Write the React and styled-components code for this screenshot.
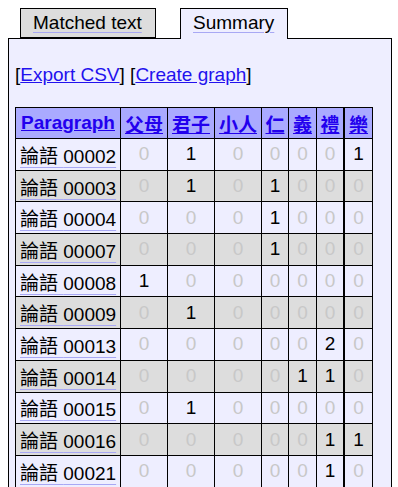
import React from 'react';
import styled, { createGlobalStyle } from 'styled-components';

const GlobalStyle = createGlobalStyle`
  body {
    margin: 0;
    background: #ffffff;
    font-family: "Liberation Sans", "Noto Sans CJK TC", sans-serif;
    color: #000000;
  }
`;

const Page = styled.div`
  padding: 8px 0 0 8px;
  width: 384px;
`;

const TabBar = styled.div`
  display: flex;
  gap: 24px;
  padding-left: 12px;
  height: 30px;
  position: relative;
  z-index: 1;
`;

const Tab = styled.div`
  box-sizing: border-box;
  width: ${({ $width }) => $width}px;
  height: ${({ $active }) => ($active ? 31 : 30)}px;
  padding: 0 12px;
  border: 1px solid #000;
  border-bottom: ${({ $active }) => ($active ? 'none' : '1px solid #000')};
  background: ${({ $active }) => ($active ? '#eeeeff' : '#dddddd')};
  font-size: 19px;
  line-height: 28px;
  white-space: nowrap;
`;

const TabLabel = styled.span`
  text-decoration: underline;
  text-decoration-color: #a8a8f4;
  text-underline-offset: 3px;
`;

const Panel = styled.div`
  box-sizing: border-box;
  width: 384px;
  border: 1px solid #000;
  background: #eeeeff;
  padding: 25px 0 20px 6px;
`;

const LinkBar = styled.div`
  font-size: 19px;
  line-height: 22px;
  margin-bottom: 21px;

  a {
    color: #2211ee;
    text-decoration: underline;
  }
`;

const Table = styled.table`
  border-collapse: collapse;
  font-size: 19px;
`;

const HeadCell = styled.th`
  width: ${({ $w }) => $w}px;
  height: 30px;
  padding: 0;
  background: #aaaaff;
  border: 1px solid #000;
  border-left-width: ${({ $thick }) => ($thick ? 2 : 1)}px;
  text-align: center;
  font-weight: bold;

  a {
    color: #2200ee;
    text-decoration: underline;
  }
`;

const Row = styled.tr`
  background: ${({ $shade }) => ($shade ? '#dddddd' : '#eeeeff')};
`;

const NameCell = styled.td`
  height: 30.7px;
  padding: 0 0 0 4px;
  border: 1px solid #000;
  white-space: nowrap;
`;

const NameLink = styled.span`
  text-decoration: underline;
  text-decoration-color: #a8a8f4;
  text-underline-offset: 4px;
`;

const CountCell = styled.td`
  height: 30.7px;
  padding: 0;
  border: 1px solid #000;
  border-left-width: ${({ $thick }) => ($thick ? 2 : 1)}px;
  text-align: center;
  color: ${({ $zero }) => ($zero ? '#c8c8c8' : '#000')};
`;

const columns = [
  { label: 'Paragraph', w: 104 },
  { label: '父母', w: 46 },
  { label: '君子', w: 46 },
  { label: '小人', w: 46 },
  { label: '仁', w: 26 },
  { label: '義', w: 27 },
  { label: '禮', w: 26 },
  { label: '樂', w: 27 },
];

const rows = [
  ['00002', [0, 1, 0, 0, 0, 0, 1]],
  ['00003', [0, 1, 0, 1, 0, 0, 0]],
  ['00004', [0, 0, 0, 1, 0, 0, 0]],
  ['00007', [0, 0, 0, 1, 0, 0, 0]],
  ['00008', [1, 0, 0, 0, 0, 0, 0]],
  ['00009', [0, 1, 0, 0, 0, 0, 0]],
  ['00013', [0, 0, 0, 0, 0, 2, 0]],
  ['00014', [0, 0, 0, 0, 1, 1, 0]],
  ['00015', [0, 1, 0, 0, 0, 0, 0]],
  ['00016', [0, 0, 0, 0, 0, 1, 1]],
  ['00021', [0, 0, 0, 0, 0, 1, 0]],
];

export default function App() {
  return (
    <>
      <GlobalStyle />
      <Page>
        <TabBar>
          <Tab $width={136}>
            <TabLabel>Matched text</TabLabel>
          </Tab>
          <Tab $width={108} $active>
            <TabLabel>Summary</TabLabel>
          </Tab>
        </TabBar>
        <Panel>
          <LinkBar>
            [<a href="#csv">Export CSV</a>] [<a href="#graph">Create graph</a>]
          </LinkBar>
          <Table>
            <thead>
              <tr>
                {columns.map((c, i) => (
                  <HeadCell key={c.label} $w={c.w} $thick={i === 7}>
                    <a href={`#${c.label}`}>{c.label}</a>
                  </HeadCell>
                ))}
              </tr>
            </thead>
            <tbody>
              {rows.map(([id, counts], r) => (
                <Row key={id} $shade={r % 2 === 1}>
                  <NameCell>
                    <NameLink>論語 {id}</NameLink>
                  </NameCell>
                  {counts.map((n, i) => (
                    <CountCell key={i} $zero={n === 0} $thick={i === 6}>
                      {n}
                    </CountCell>
                  ))}
                </Row>
              ))}
            </tbody>
          </Table>
        </Panel>
      </Page>
    </>
  );
}
